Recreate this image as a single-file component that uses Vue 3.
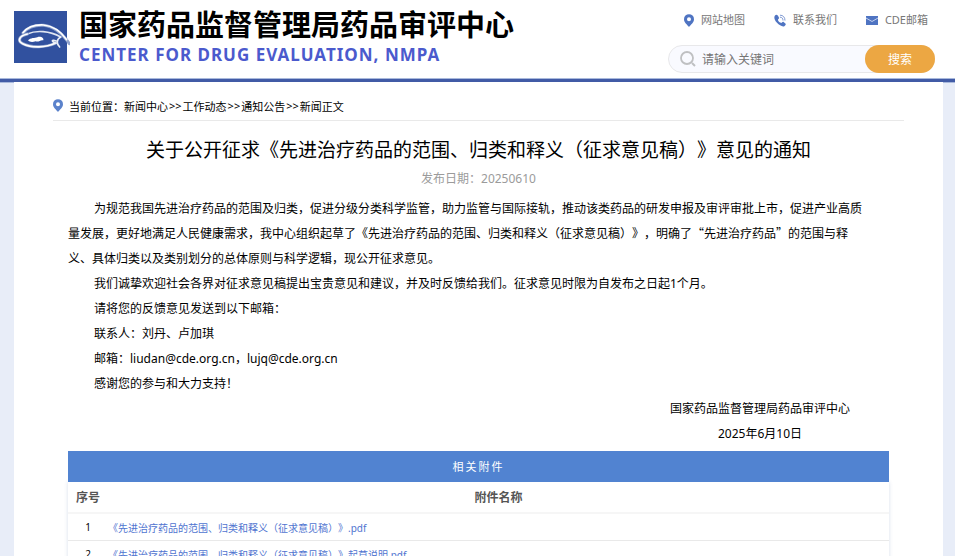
<script setup>
const crumbs = ['新闻中心', '工作动态', '通知公告', '新闻正文']

const paragraphs = [
  '为规范我国先进治疗药品的范围及归类，促进分级分类科学监管，助力监管与国际接轨，推动该类药品的研发申报及审评审批上市，促进产业高质量发展，更好地满足人民健康需求，我中心组织起草了《先进治疗药品的范围、归类和释义（征求意见稿）》，明确了“先进治疗药品”的范围与释义、具体归类以及类别划分的总体原则与科学逻辑，现公开征求意见。',
  '我们诚挚欢迎社会各界对征求意见稿提出宝贵意见和建议，并及时反馈给我们。征求意见时限为自发布之日起1个月。',
  '请将您的反馈意见发送到以下邮箱：',
  '联系人：刘丹、卢加琪',
  '邮箱：liudan@cde.org.cn，lujq@cde.org.cn',
  '感谢您的参与和大力支持！',
]

// Quoted terms are set in the CJK face so that their quotation marks are full width.
const splitQuotes = (text) => text.split(/(“[^”]*”)/).filter(Boolean)

const attachments = [
  '《先进治疗药品的范围、归类和释义（征求意见稿）》.pdf',
  '《先进治疗药品的范围、归类和释义（征求意见稿）》起草说明.pdf',
]
</script>

<template>
  <div class="site">
    <header class="header">
      <a class="brand" href="#">
        <svg class="logo" viewBox="0 0 168 156" aria-hidden="true">
          <rect width="159" height="156" fill="#31519f" />
          <g fill="none" stroke-linecap="round" stroke-linejoin="round">
            <path d="M27 66C42 48 66 42 88 43C121 46 146 69 166 98" stroke="#8fa2cc" stroke-width="9" />
            <path d="M27 65C42 47 66 41 88 42C121 45 144 66 158 86" stroke="#fff" stroke-width="5" />
            <path d="M40 69C66 57 107 59 140 78" stroke="#dfe5f1" stroke-width="5" />
            <path d="M40 69C14 75 10 90 26 98C54 112 95 110 126 96" stroke="#8fa2cc" stroke-width="9" />
            <path d="M40 69C14 75 10 90 26 98C54 112 95 110 126 96" stroke="#fff" stroke-width="5" />
            <path d="M140 78C126 86 128 99 137 108M124 96C110 91 114 84 126 90" stroke="#e9edf5" stroke-width="5" />
          </g>
          <path d="M42 88C50 80 62 82 70 79C79 75 90 80 88 88C80 85 75 94 65 91C56 94 47 94 42 88Z" fill="#fff" />
        </svg>
        <span class="brand-text">
          <span class="brand-cn">国家药品监督管理局药品审评中心</span>
          <span class="brand-en">CENTER FOR DRUG EVALUATION, NMPA</span>
        </span>
      </a>
      <div class="tools">
        <nav class="links">
          <a href="#">
            <svg viewBox="0 0 11 14" width="10" height="13" aria-hidden="true">
              <path fill-rule="evenodd" fill="#4f74c2" d="M5.500 0A5.500 5.500 0 0 1 11 5.500C11 9 7.500 11.500 5.500 14C3.500 11.500 0 9 0 5.500A5.500 5.500 0 0 1 5.500 0ZM5.500 3.300a2.200 2.200 0 1 0 0 4.400a2.200 2.200 0 0 0 0-4.400Z" />
            </svg>
            网站地图
          </a>
          <a href="#">
            <svg viewBox="0 0 36 38" width="12" height="13" aria-hidden="true">
              <path fill="#4f74c2" d="M3 4C6 0 9 1 12 5L15 11C16 14 11 15 12 18C14 22 17 25 21 26C24 27 25 22 28 23L34 28C37 30 34 34 31 36C26 39 16 34 9 26C1 17-1 9 3 4Z" />
              <path fill="none" stroke="#7f9ad3" stroke-width="3" stroke-linecap="round" d="M19 3C27 3 33 9 33 18M19 9C24 9 27 13 27 18" />
            </svg>
            联系我们
          </a>
          <a href="#">
            <svg viewBox="0 0 12 9" width="12" height="9" aria-hidden="true">
              <rect width="12" height="9" fill="#4f74c2" />
              <path d="M0 2L6 5.500L12 2" fill="none" stroke="#c3d1ee" stroke-width="1" />
            </svg>
            CDE邮箱
          </a>
        </nav>
        <form class="search" role="search" @submit.prevent>
          <svg viewBox="0 0 16 16" width="16" height="16" aria-hidden="true">
            <circle cx="7" cy="7" r="6" fill="none" stroke="#bfc0c2" stroke-width="1.800" />
            <path d="M12 12L15 15" stroke="#bfc0c2" stroke-width="2" />
          </svg>
          <input type="text" placeholder="请输入关键词" aria-label="请输入关键词" />
          <button type="submit">搜索</button>
        </form>
      </div>
    </header>

    <main class="page">
      <nav class="crumbs">
        <svg viewBox="0 0 11 14" width="10" height="13" aria-hidden="true">
          <path fill-rule="evenodd" fill="#5b82cb" d="M5.500 0A5.500 5.500 0 0 1 11 5.500C11 9 7.500 11.500 5.500 14C3.500 11.500 0 9 0 5.500A5.500 5.500 0 0 1 5.500 0ZM5.500 3.300a2.200 2.200 0 1 0 0 4.400a2.200 2.200 0 0 0 0-4.400Z" />
        </svg>
        <span>当前位置：</span>
        <template v-for="(c, i) in crumbs" :key="c">
          <span v-if="i" class="sep">&gt;&gt;</span>
          <a href="#">{{ c }}</a>
        </template>
      </nav>

      <article class="article">
        <h1>关于公开征求《先进治疗药品的范围、归类和释义（征求意见稿）》意见的通知</h1>
        <p class="date">发布日期：20250610</p>
        <div class="body">
          <p v-for="p in paragraphs" :key="p"><template v-for="(s, i) in splitQuotes(p)" :key="i"><span v-if="s[0] === '“'" class="quoted">{{ s }}</span><template v-else>{{ s }}</template></template></p>
        </div>
        <div class="sign">
          <div class="sign-block">
            <p>国家药品监督管理局药品审评中心</p>
            <p>2025年6月10日</p>
          </div>
        </div>

        <table class="files">
          <caption>相关附件</caption>
          <thead>
            <tr>
              <th class="num" scope="col">序号</th>
              <th scope="col">附件名称</th>
            </tr>
          </thead>
          <tbody>
            <tr v-for="(f, i) in attachments" :key="f">
              <td class="num">{{ i + 1 }}</td>
              <td><a href="#">{{ f }}</a></td>
            </tr>
          </tbody>
        </table>
      </article>
    </main>
  </div>
</template>

<style>
body {
  background: #e8edf8;
}
</style>

<style scoped>
.site {
  font-family: "Noto Sans", "Noto Sans CJK SC", sans-serif;
  font-size: 12px;
  color: #000;
  text-spacing-trim: space-all;
}
a {
  color: inherit;
  text-decoration: none;
}
p,
h1 {
  margin: 0;
}
.header {
  display: flex;
  justify-content: space-between;
  height: 79px;
  padding: 0 20px 0 14px;
  background: #fff;
  border-bottom: 3px solid #415ba6;
  box-shadow: 0 1px 0 #a9b9dc, inset 0 -1px 0 #a9b9dc;
}
.brand {
  display: flex;
  align-items: flex-start;
  gap: 9px;
  padding-top: 11px;
}
.logo {
  width: 56px;
  height: 52px;
}
.brand-text {
  display: flex;
  flex-direction: column;
  white-space: nowrap;
}
.brand-cn {
  font-size: 29px;
  line-height: 28px;
  font-weight: 700;
}
.brand-en {
  font-size: 17px;
  line-height: 32px;
  font-weight: 700;
  letter-spacing: 1px;
  color: #4b5acd;
}
.tools {
  display: flex;
  flex-direction: column;
  align-items: flex-end;
  gap: 17px;
  padding-top: 12px;
}
.links {
  display: flex;
  gap: 29px;
  padding-right: 7px;
  font-size: 11px;
  line-height: 16px;
  color: #777;
}
.links a {
  display: flex;
  align-items: center;
  gap: 7px;
}
.search {
  display: flex;
  align-items: center;
  width: 267px;
  height: 28px;
  box-sizing: border-box;
  padding-left: 11px;
  background: #f9faff;
  border: 1px solid #e8e8ea;
  border-radius: 14px;
}
.search input {
  flex: 1;
  min-width: 0;
  padding: 0 6px;
  border: 0;
  outline: 0;
  background: transparent;
  font: inherit;
  color: #444;
}
.search input::placeholder {
  color: #757575;
  opacity: 1;
}
.search button {
  width: 70px;
  height: 28px;
  flex: none;
  margin-right: -1px;
  padding: 0;
  border: 0;
  border-radius: 14px;
  background: #eca743;
  color: #fff;
  font: inherit;
}
.page {
  margin: 0 12px 0 14px;
  padding: 9px 39px 30px;
  background: #fff;
}
.crumbs {
  display: flex;
  align-items: center;
  height: 29px;
  border-bottom: 1px solid #e9e9e9;
  font-size: 11px;
}
.crumbs svg {
  margin-right: 6px;
}
.sep {
  margin: 0 1px;
}
.article {
  padding: 15px 15px 0;
}
h1 {
  font-size: 19px;
  line-height: 28px;
  font-weight: 400;
  text-align: center;
}
.date {
  line-height: 30px;
  text-align: center;
  color: #9b9b9b;
}
.body {
  padding: 2px 24px 0 0;
  line-height: 25px;
}
.body p {
  text-indent: 26px;
}
.quoted {
  font-family: "Noto Sans CJK SC", sans-serif;
  line-height: 1;
}
.sign {
  display: flex;
  justify-content: flex-end;
  padding-right: 39px;
  line-height: 25px;
  text-align: center;
}
.files {
  width: 100%;
  margin-top: 5px;
  border-collapse: collapse;
  box-shadow: 0 0 4px rgba(60, 90, 150, 0.2);
}
.files caption {
  background: #5183d1;
  color: #fff;
  font-size: 11px;
  line-height: 31px;
  letter-spacing: 2px;
}
.files th {
  height: 30px;
  padding: 0;
  border-bottom: 2px solid #f6f6f6;
  color: #555;
  font-weight: 700;
}
.files td {
  height: 26px;
  padding: 0;
  border-bottom: 1px solid #e9e9e9;
  font-size: 10px;
}
.files .num {
  width: 40px;
  text-align: center;
}
.files td a {
  color: #4f74d0;
}
</style>
